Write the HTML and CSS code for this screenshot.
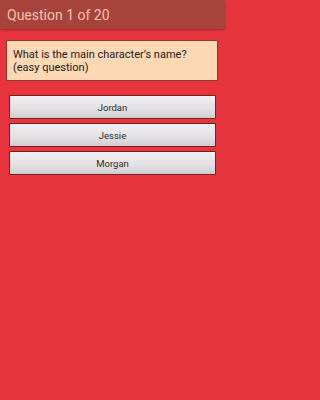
FILE: index.html
```html
<!DOCTYPE html>
<html>
<head>
<meta charset="utf-8">
<meta name="viewport" content="width=225">
<link rel="stylesheet" href="styles.css">
</head>
<body>
<div class="screen">
  <header class="bar">Question 1 of 20</header>
  <main class="content">
    <div class="question">What is the main character’s name? (easy question)</div>
    <div class="answers">
      <button class="answer">Jordan</button>
      <button class="answer">Jessie</button>
      <button class="answer">Morgan</button>
    </div>
  </main>
</div>
</body>
</html>
```
FILE: styles.css
```css
html, body {
  margin: 0;
  padding: 0;
  height: 100%;
  background: #e8353d;
}
body {
  font-family: Roboto, "Liberation Sans", sans-serif;
}
.screen {
  width: 225px;
  height: 400px;
  background: #e8353d;
}
.bar {
  height: 29px;
  background: #a8433c;
  color: #f6c4ad;
  font-size: 14px;
  line-height: 31px;
  padding-left: 7px;
  box-shadow: 0 1px 2px rgba(90, 20, 20, 0.5);
}
.content {
  padding: 11px 7px 0 6px;
}
.question {
  background: #fdd8b4;
  border: 1px solid #8c3a2c;
  padding: 7px 6px 6px 6px;
  font-size: 11px;
  line-height: 13px;
  color: #1c1c1c;
  height: 26px;
}
.answers {
  display: flex;
  flex-direction: column;
  gap: 4px;
  margin: 14px 2px 0 3px;
}
.answer {
  height: 24px;
  border: 1px solid #6a2424;
  border-radius: 1px;
  background: linear-gradient(#f1eff2, #e2e0e2 60%, #cfcdcf);
  font-family: Roboto, "Liberation Sans", sans-serif;
  font-size: 9.5px;
  color: #2e2e2e;
  padding: 0;
}
```
